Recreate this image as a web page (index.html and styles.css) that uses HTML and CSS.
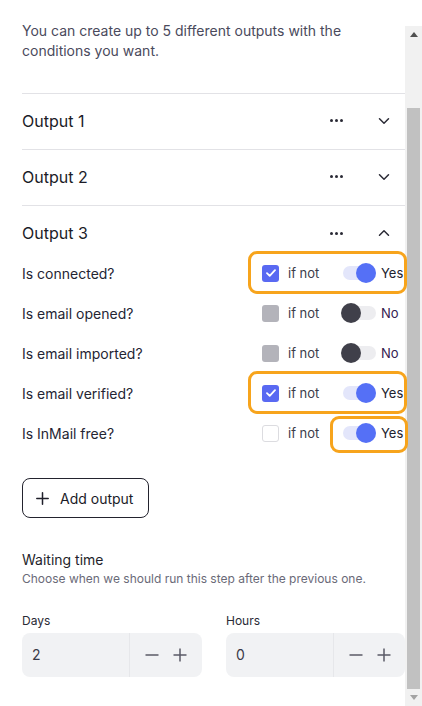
FILE: index.html
```html
<!DOCTYPE html>
<html lang="en">
<head>
<meta charset="utf-8">
<title>Outputs</title>
<link rel="stylesheet" href="styles.css">
</head>
<body>
<div class="app">
  <main class="panel">
    <p class="intro">You can create up to 5 different outputs with the conditions you want.</p>

    <div class="output-head">
      <span class="output-title">Output 1</span>
      <span class="dots"><i></i><i></i><i></i></span>
      <svg class="chev" width="12" height="8" viewBox="0 0 12 8"><path d="M1.5 1.8 6 6.2 10.5 1.8" fill="none" stroke="#2a2a35" stroke-width="1.5" stroke-linecap="round" stroke-linejoin="round"/></svg>
    </div>
    <div class="output-head">
      <span class="output-title">Output 2</span>
      <span class="dots"><i></i><i></i><i></i></span>
      <svg class="chev" width="12" height="8" viewBox="0 0 12 8"><path d="M1.5 1.8 6 6.2 10.5 1.8" fill="none" stroke="#2a2a35" stroke-width="1.5" stroke-linecap="round" stroke-linejoin="round"/></svg>
    </div>
    <div class="output-head open">
      <span class="output-title">Output 3</span>
      <span class="dots"><i></i><i></i><i></i></span>
      <svg class="chev" width="12" height="8" viewBox="0 0 12 8"><path d="M1.5 6.2 6 1.8 10.5 6.2" fill="none" stroke="#2a2a35" stroke-width="1.5" stroke-linecap="round" stroke-linejoin="round"/></svg>
    </div>

    <div class="conditions">
      <div class="cond">
        <span class="cond-label">Is connected?</span>
        <div class="controls hl-all">
          <span class="check on"><svg width="10" height="8" viewBox="0 0 10 8"><path d="M1 4.2 3.7 6.8 9 1.2" fill="none" stroke="#fff" stroke-width="1.8" stroke-linecap="round" stroke-linejoin="round"/></svg></span>
          <span class="ifnot">if not</span>
          <span class="tog-group">
            <span class="toggle on"><span class="track"></span><span class="knob"></span></span>
            <span class="tog-text">Yes</span>
          </span>
        </div>
      </div>
      <div class="cond">
        <span class="cond-label">Is email opened?</span>
        <div class="controls">
          <span class="check disabled"></span>
          <span class="ifnot">if not</span>
          <span class="tog-group">
            <span class="toggle off"><span class="track"></span><span class="knob"></span></span>
            <span class="tog-text no">No</span>
          </span>
        </div>
      </div>
      <div class="cond">
        <span class="cond-label">Is email imported?</span>
        <div class="controls">
          <span class="check disabled"></span>
          <span class="ifnot">if not</span>
          <span class="tog-group">
            <span class="toggle off"><span class="track"></span><span class="knob"></span></span>
            <span class="tog-text no">No</span>
          </span>
        </div>
      </div>
      <div class="cond">
        <span class="cond-label">Is email verified?</span>
        <div class="controls hl-all">
          <span class="check on"><svg width="10" height="8" viewBox="0 0 10 8"><path d="M1 4.2 3.7 6.8 9 1.2" fill="none" stroke="#fff" stroke-width="1.8" stroke-linecap="round" stroke-linejoin="round"/></svg></span>
          <span class="ifnot">if not</span>
          <span class="tog-group">
            <span class="toggle on"><span class="track"></span><span class="knob"></span></span>
            <span class="tog-text">Yes</span>
          </span>
        </div>
      </div>
      <div class="cond">
        <span class="cond-label">Is InMail free?</span>
        <div class="controls">
          <span class="check empty"></span>
          <span class="ifnot">if not</span>
          <span class="tog-group hl-tog">
            <span class="toggle on"><span class="track"></span><span class="knob"></span></span>
            <span class="tog-text">Yes</span>
          </span>
        </div>
      </div>
    </div>

    <button class="add-btn" type="button">
      <svg width="13" height="13" viewBox="0 0 13 13"><path d="M6.5 0.8v11.4M0.8 6.5h11.4" stroke="#1f1f2a" stroke-width="1.5" stroke-linecap="round"/></svg>
      <span>Add output</span>
    </button>

    <div class="waiting">
      <div class="waiting-title">Waiting time</div>
      <div class="waiting-sub">Choose when we should run this step after the previous one.</div>
    </div>

    <div class="fields">
      <div class="field">
        <div class="field-label">Days</div>
        <div class="stepper">
          <span class="stepper-val">2</span>
          <span class="stepper-btns">
            <svg width="14" height="14" viewBox="0 0 14 14"><path d="M0.5 7h13" stroke="#5a5a66" stroke-width="1.5"/></svg>
            <svg width="14" height="14" viewBox="0 0 14 14"><path d="M7 0.5v13M0.5 7h13" stroke="#5a5a66" stroke-width="1.5"/></svg>
          </span>
        </div>
      </div>
      <div class="field">
        <div class="field-label">Hours</div>
        <div class="stepper">
          <span class="stepper-val">0</span>
          <span class="stepper-btns">
            <svg width="14" height="14" viewBox="0 0 14 14"><path d="M0.5 7h13" stroke="#5a5a66" stroke-width="1.5"/></svg>
            <svg width="14" height="14" viewBox="0 0 14 14"><path d="M7 0.5v13M0.5 7h13" stroke="#5a5a66" stroke-width="1.5"/></svg>
          </span>
        </div>
      </div>
    </div>
  </main>

  <div class="scrollbar">
    <div class="sb-arrow"><svg width="8" height="5" viewBox="0 0 8 5"><path d="M0 5 4 0 8 5z" fill="#505050"/></svg></div>
    <div class="sb-track"><div class="sb-thumb"></div></div>
    <div class="sb-arrow"><svg width="8" height="5" viewBox="0 0 8 5"><path d="M0 0 4 5 8 0z" fill="#a3a3a3"/></svg></div>
  </div>
</div>
</body>
</html>
```

FILE: styles.css
```css
* { box-sizing: border-box; }

html, body {
  margin: 0;
  padding: 0;
  background: #ffffff;
}

body {
  font-family: Inter, "Noto Sans", sans-serif;
  color: #1f1f2b;
  width: 422px;
  height: 706px;
  overflow: hidden;
}

.app {
  display: flex;
  height: 706px;
}

.panel {
  width: 405px;
  flex: none;
  padding: 21px 0 0 22px;
}

.intro {
  margin: 0;
  font-size: 14px;
  line-height: 20px;
  color: #4a4a5c;
  padding-bottom: 32px;
  border-bottom: 1px solid #e2e2e6;
  width: 383px;
  padding-right: 50px;
}

.output-head {
  display: flex;
  align-items: center;
  height: 56px;
  padding-bottom: 2px;
  border-bottom: 1px solid #e2e2e6;
}

.output-head.open {
  border-bottom: none;
  height: 47px;
  align-items: flex-start;
  padding-top: 16px;
  padding-bottom: 0;
}

.output-title {
  flex: 1;
  font-size: 16px;
  line-height: 22px;
  color: #1b1b27;
}

.dots {
  display: flex;
  gap: 2px;
  width: 14px;
  margin-right: 34px;
  align-self: center;
}

.open .dots { align-self: auto; height: 22px; align-items: center; }

.dots i {
  display: block;
  width: 3px;
  height: 3px;
  border-radius: 50%;
  background: #2a2a35;
}

.chev {
  display: block;
  margin-right: 15px;
}

.open .chev { margin-top: 7px; }

.conditions {
  display: flex;
  flex-direction: column;
}

.cond {
  display: flex;
  align-items: center;
  height: 40px;
}

.cond-label {
  flex: 1;
  font-size: 14px;
  color: #252533;
}

.controls {
  position: relative;
  display: flex;
  align-items: center;
  width: 143px;
  height: 20px;
}

.check {
  width: 17px;
  height: 17px;
  border-radius: 3px;
  display: flex;
  align-items: center;
  justify-content: center;
  flex: none;
}

.check.on { background: #5969f2; }
.check.disabled { background: #b3b3ba; }
.check.empty { background: #fff; border: 1px solid #dcdce0; }

.ifnot {
  font-size: 13px;
  color: #3c3c4a;
  margin-left: 9px;
  width: 53px;
}

.tog-group {
  position: relative;
  display: flex;
  align-items: center;
  height: 20px;
}

.toggle {
  position: relative;
  width: 35px;
  height: 20px;
  display: block;
}

.track {
  position: absolute;
  left: 2px;
  right: 0;
  top: 3px;
  height: 14px;
  border-radius: 7px;
}

.knob {
  position: absolute;
  top: 0;
  width: 20px;
  height: 20px;
  border-radius: 50%;
}

.toggle.on .track { background: #e3e6fb; }
.toggle.on .knob { right: 0; background: #5570f6; }
.toggle.off .track { background: #ededf0; }
.toggle.off .knob { left: 0; background: #40404a; }

.tog-text {
  margin-left: 5px;
  font-size: 13px;
  color: #22222e;
}

.tog-text.no { color: #34204f; }

.hl-all::before,
.hl-tog::before {
  content: "";
  position: absolute;
  border: 3px solid #f7a41c;
  border-radius: 9px;
  pointer-events: none;
}

.hl-all::before {
  left: -14px;
  right: -2px;
  top: -12px;
  bottom: -11px;
}

.hl-tog::before {
  left: -11px;
  right: -5px;
  top: -7px;
  bottom: -10px;
}

.add-btn {
  display: flex;
  align-items: center;
  gap: 11px;
  margin-top: 25px;
  width: 127px;
  height: 40px;
  padding: 0 0 0 13px;
  background: #fff;
  border: 1px solid #23232e;
  border-radius: 8px;
  font-family: inherit;
  font-size: 14px;
  color: #1b1b27;
}

.waiting {
  margin-top: 32px;
}

.waiting-title {
  font-size: 14px;
  line-height: 20px;
  color: #1f1f2b;
}

.waiting-sub {
  font-size: 12px;
  line-height: 18px;
  color: #6a6a78;
}

.fields {
  display: grid;
  grid-template-columns: 180px 179px;
  gap: 24px;
  margin-top: 25px;
}

.field-label {
  font-size: 12px;
  line-height: 16px;
  color: #2a2a36;
  margin-bottom: 4px;
}

.stepper {
  display: flex;
  align-items: center;
  height: 44px;
  background: #f1f2f4;
  border-radius: 8px;
}

.stepper-val {
  flex: none;
  width: 108px;
  padding-left: 10px;
  padding-bottom: 2px;
  font-size: 14px;
  color: #3a3a48;
  align-self: stretch;
  display: flex;
  align-items: center;
  border-right: 1px solid #e6e7ea;
}

.stepper-btns {
  display: flex;
  gap: 14px;
  padding-left: 15px;
}

.stepper-btns svg { display: block; }

.scrollbar {
  width: 17px;
  flex: none;
  margin-top: 26px;
  background: #f1f1f1;
  display: flex;
  flex-direction: column;
}

.sb-arrow {
  height: 17px;
  display: flex;
  align-items: center;
  justify-content: center;
  flex: none;
}

.sb-track {
  flex: 1;
  padding: 65px 2px 0 2px;
}

.sb-thumb {
  height: 100%;
  background: #c1c1c1;
}
```
